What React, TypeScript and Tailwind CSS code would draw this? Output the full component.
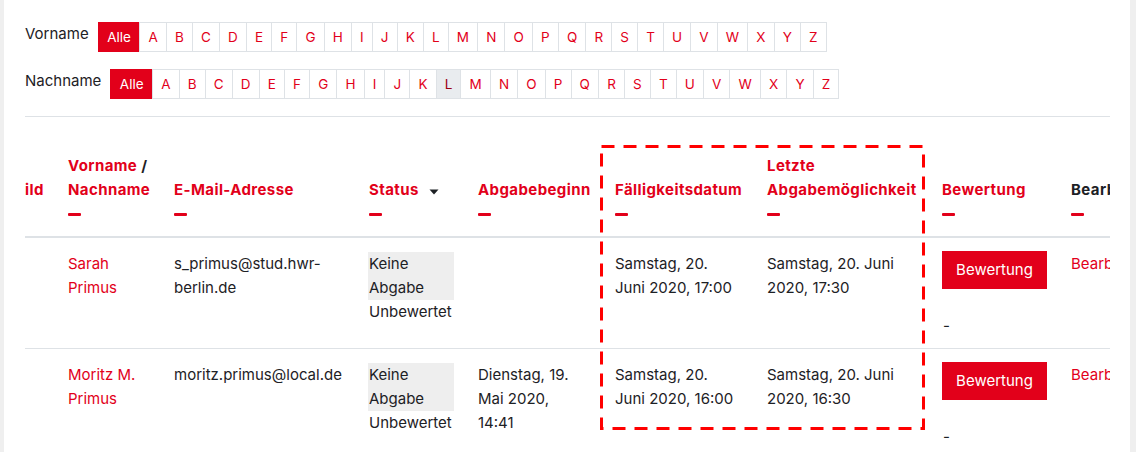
import React from "react";

const letters = "ABCDEFGHIJKLMNOPQRSTUVWXYZ".split("");
const red = "text-[#e2001a]";

function InitialBar({ label, active }: { label: string; active?: string }) {
  return (
    <div className="flex items-start">
      <span className="mr-[9px] text-[15px] leading-6 text-[#1d2125]">{label}</span>
      <ul className="flex">
        <li className="flex h-[30px] items-center border border-[#e2001a] bg-[#e2001a] px-[8.5px] text-[13.5px] text-white">
          Alle
        </li>
        {letters.map((l) => (
          <li
            key={l}
            className={
              l === active
                ? "-ml-px flex h-[30px] items-center border border-[#dee2e6] bg-[#e9ecef] px-[8.1px] text-[13.5px] text-[#9c0010]"
                : "-ml-px flex h-[30px] items-center border border-[#dee2e6] bg-white px-[8.1px] text-[13.5px] text-[#e2001a]"
            }
          >
            {l}
          </li>
        ))}
      </ul>
    </div>
  );
}

function Dash() {
  return (
    <div className="flex h-6 items-center">
      <div className="h-[3px] w-[13px] rounded-[1px] bg-[#e2001a]" />
    </div>
  );
}

const cols = "grid grid-cols-[31px_106px_195px_109px_137px_152px_175px_129px_120px]";

function Row({
  first,
  last,
  email,
  start,
  due,
  cutoff,
}: {
  first: string;
  last: string;
  email: React.ReactNode;
  start: React.ReactNode;
  due: React.ReactNode;
  cutoff: React.ReactNode;
}) {
  const cell = "px-3 pt-[14px] pb-[10px]";
  return (
    <div className={`${cols} border-b border-[#dee2e6] text-[15px] leading-6 text-[#1d2125]`}>
      <div className="pt-[14px] pb-[10px]" />
      <div className={`${cell} ${red}`}>
        {first}
        <br />
        {last}
      </div>
      <div className={cell}>{email}</div>
      <div className={cell}>
        <div className="-ml-px w-[86px] bg-[#eeeeee] pl-px">
          Keine
          <br />
          Abgabe
        </div>
        <div>Unbewertet</div>
      </div>
      <div className={cell}>{start}</div>
      <div className={cell}>{due}</div>
      <div className={cell}>{cutoff}</div>
      <div className={cell}>
        <button className="-mt-px h-[38px] w-[105px] border border-[#e2001a] bg-[#e2001a] text-[15px] text-white">
          Bewertung
        </button>
        <div className="mt-[25px] pl-px">-</div>
      </div>
      <div className={`${cell} whitespace-nowrap ${red}`}>Bearbeiten</div>
    </div>
  );
}

export default function App() {
  const th = "flex flex-col justify-end whitespace-nowrap px-3 pb-[10px] font-bold tracking-[0.4px]";
  return (
    <div className="relative flex h-[452px] w-[1136px] overflow-hidden bg-white font-['Inter','Liberation_Sans',sans-serif]">
      <div className="w-1 shrink-0 bg-[#efefef]" />
      <div className="flex-1 pl-[21px] pt-[22px]">
        <InitialBar label="Vorname" />
        <div className="mt-[17px]">
          <InitialBar label="Nachname" active="L" />
        </div>

        <div className="mt-[17px] w-[1085px] overflow-hidden border-t border-[#dee2e6]">
          <div className={`${cols} h-[121px] border-b-2 border-[#dee2e6] text-[15px] leading-6`}>
            <div className="flex flex-col justify-end pb-[10px] font-bold tracking-[0.4px]">
              <span className={red}>ild</span>
              <div className="h-6" />
            </div>
            <div className={th}>
              <span>
                <span className={red}>Vorname</span> <span className="text-[#1d2125]">/</span>
              </span>
              <span className={red}>Nachname</span>
              <Dash />
            </div>
            <div className={th}>
              <span className={red}>E-Mail-Adresse</span>
              <Dash />
            </div>
            <div className={th}>
              <span className="flex items-center">
                <span className={red}>Status</span>
                <svg className="ml-[10px] mt-[3px]" width="10" height="6" viewBox="0 0 10 6">
                  <path d="M0.5 0.5h9L5 5.5z" fill="#1d2125" />
                </svg>
              </span>
              <Dash />
            </div>
            <div className={th}>
              <span className={red}>Abgabebeginn</span>
              <Dash />
            </div>
            <div className={th}>
              <span className={red}>Fälligkeitsdatum</span>
              <Dash />
            </div>
            <div className={th}>
              <span className={red}>Letzte</span>
              <span className={red}>Abgabemöglichkeit</span>
              <Dash />
            </div>
            <div className={th}>
              <span className={red}>Bewertung</span>
              <Dash />
            </div>
            <div className={th}>
              <span className="text-[#1d2125]">Bearbeiten</span>
              <Dash />
            </div>
          </div>

          <Row
            first="Sarah"
            last="Primus"
            email={
              <>
                s_primus@stud.hwr-
                <br />
                berlin.de
              </>
            }
            start={null}
            due={
              <>
                Samstag, 20.
                <br />
                Juni 2020, 17:00
              </>
            }
            cutoff={
              <>
                Samstag, 20. Juni
                <br />
                2020, 17:30
              </>
            }
          />
          <Row
            first="Moritz M."
            last="Primus"
            email="moritz.primus@local.de"
            start={
              <>
                Dienstag, 19.
                <br />
                Mai 2020,
                <br />
                14:41
              </>
            }
            due={
              <>
                Samstag, 20.
                <br />
                Juni 2020, 16:00
              </>
            }
            cutoff={
              <>
                Samstag, 20. Juni
                <br />
                2020, 16:30
              </>
            }
          />
        </div>
      </div>
      <div className="w-[6px] shrink-0 bg-[#efefef]" />

      <svg className="absolute left-[600px] top-[145px]" width="326" height="287" viewBox="0 0 326 287">
        <rect x="1.5" y="1.5" width="322" height="282" fill="none" stroke="#ff0000" strokeWidth="3" strokeDasharray="13 9" />
      </svg>
    </div>
  );
}
